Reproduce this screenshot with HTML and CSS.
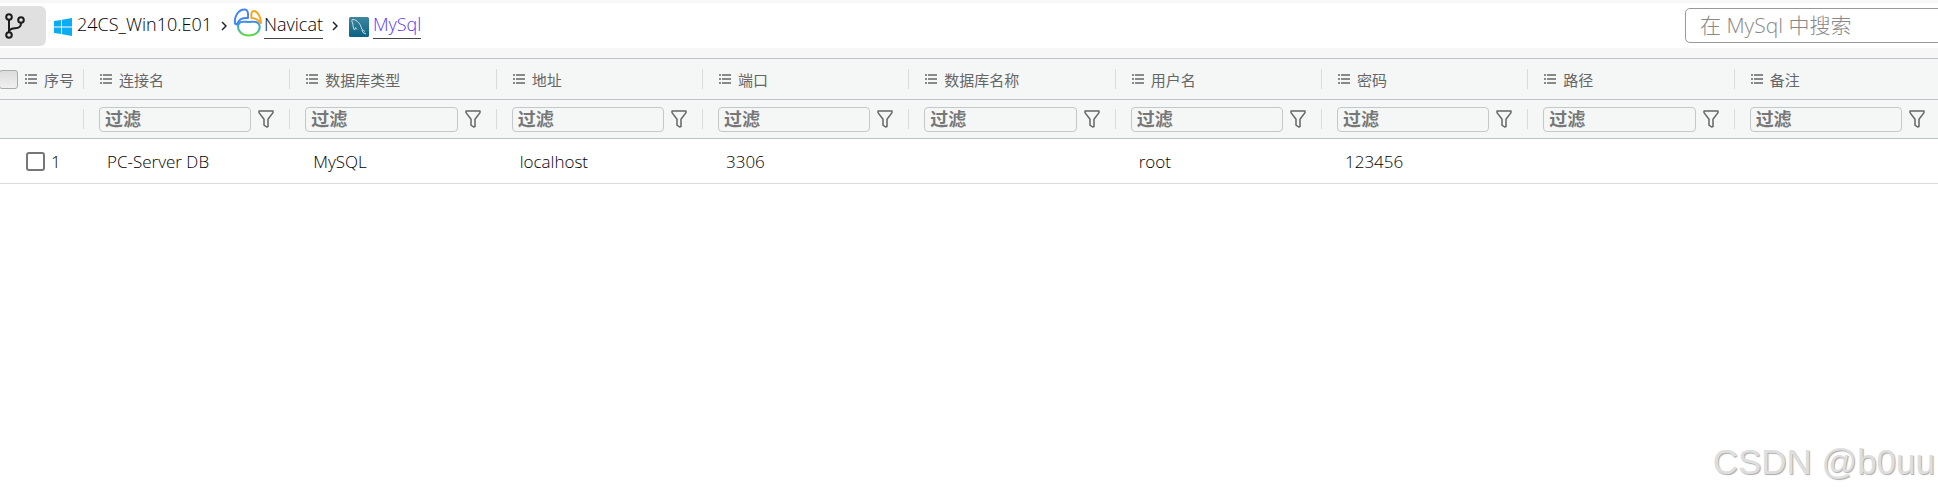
FILE: index.html
```
<!DOCTYPE html>
<html lang="zh-CN">
<head>
<meta charset="UTF-8">
<meta name="viewport" content="width=device-width, initial-scale=1">
<title>MySql</title>
<link rel="stylesheet" href="styles.css">
</head>
<body>

<!-- icons shared by all columns -->
<svg class="sprite" aria-hidden="true">
    <symbol id="menu" viewBox="0 0 12 10">
        <path d="M0 1h2M3 1h9M0 5h2M3 5h9M0 9h2M3 9h9" stroke="currentColor" stroke-width="1.3"/>
    </symbol>
    <symbol id="funnel" viewBox="0 0 16 18">
        <path d="M1 1h14v1.6L10 9.2v7.3L8.6 17 6 15.2v-6L1 2.6z" fill="none" stroke="currentColor" stroke-width="1.5" stroke-linejoin="round"/>
    </symbol>
</svg>

<header class="topbar">
    <button class="tree-button" type="button" aria-label="目录树">
        <svg width="20" height="26" viewBox="0 0 20 26" fill="none" stroke="#1c1c1c" stroke-width="2">
            <circle cx="4" cy="4" r="2.8"/>
            <circle cx="16" cy="7" r="2.8"/>
            <circle cx="4" cy="22" r="2.8"/>
            <path d="M4 7v12M16 10c0 4-2 5-6 5.300-3 .2-5 .7-6 3"/>
        </svg>
    </button>
    <nav class="breadcrumb">
        <svg class="win-icon" width="18" height="18" viewBox="0 0 18 18" fill="#0cacf5">
            <path d="M0 3l7-1v6.500H0zM8 1.800L18 0v8.500H8zM0 9.500h7V16l-7-1zM8 9.500h10V18L8 16.300z"/>
        </svg>
        <a class="crumb" href="#">24CS_Win10.E01</a>
        <svg class="arrow" width="6" height="10" viewBox="0 0 6 10"><path d="M1 1l4 4-4 4" fill="none" stroke="#222" stroke-width="1.500"/></svg>
        <svg class="navicat-icon" width="30" height="30" viewBox="0 0 30 30" fill="none" stroke-width="2" stroke-linecap="round" stroke-linejoin="round">
            <defs>
                <linearGradient id="ring" x1="0" y1="0" x2="0" y2="1">
                    <stop offset="0" stop-color="#3f8cf0"/>
                    <stop offset=".5" stop-color="#35b9a8"/>
                    <stop offset="1" stop-color="#5fd93c"/>
                </linearGradient>
            </defs>
            <path d="M6 15.500C3 21 8 27.500 16 27.500S29 21 25.500 15.500C23 12.500 20 14 16 14S8 12.500 6 15.500z" stroke="url(#ring)"/>
            <path d="M2 15.500C1 8 6 1 12 1.500c3 .3 3.500 3 3 8.500-4.500-.5-8 1-9.500 3.500L4 16.500z" stroke="#4087f2"/>
            <path d="M18.500 10c-.5-3.500 0-7 2-7 4 0 7.500 6 7.500 12-2.500-3-5-5-9.500-5z" stroke="#f8a51b"/>
        </svg>
        <a class="crumb link" href="#">Navicat</a>
        <svg class="arrow" width="6" height="10" viewBox="0 0 6 10"><path d="M1 1l4 4-4 4" fill="none" stroke="#222" stroke-width="1.500"/></svg>
        <svg class="mysql-icon" width="20" height="20" viewBox="0 0 20 20">
            <defs>
                <linearGradient id="sea" x1="0" y1="0" x2="0" y2="1">
                    <stop offset="0" stop-color="#3d879f"/>
                    <stop offset="1" stop-color="#0a6285"/>
                </linearGradient>
            </defs>
            <rect width="20" height="20" rx="1.500" fill="url(#sea)"/>
            <path d="M5.500 13C3.500 11 4.500 8 3.500 6 3 4 2 2.500 4 2.500c2 0 4 1.500 5.500 3C11.500 7.500 12 10 13 12.500c1 .8 2 1 3 2M5.500 13l1-2.500 1.500 2M13 13l1 2.500 3 1.500" fill="none" stroke="#c7dfe6" stroke-width="1"/>
        </svg>
        <a class="crumb link current" href="#">MySql</a>
    </nav>
    <input class="search" type="search" placeholder="在 MySql 中搜索" aria-label="在 MySql 中搜索">
</header>

<main class="grid">
    <table>
        <colgroup>
            <col class="col-index">
            <col span="9">
        </colgroup>
        <thead>
            <tr class="titles">
                <th><div class="title index"><input class="check-all" type="checkbox" aria-label="全选"><svg class="menu"><use href="#menu"/></svg>序号</div></th>
                <th><div class="title"><svg class="menu"><use href="#menu"/></svg>连接名</div></th>
                <th><div class="title"><svg class="menu"><use href="#menu"/></svg>数据库类型</div></th>
                <th><div class="title"><svg class="menu"><use href="#menu"/></svg>地址</div></th>
                <th><div class="title"><svg class="menu"><use href="#menu"/></svg>端口</div></th>
                <th><div class="title"><svg class="menu"><use href="#menu"/></svg>数据库名称</div></th>
                <th><div class="title"><svg class="menu"><use href="#menu"/></svg>用户名</div></th>
                <th><div class="title"><svg class="menu"><use href="#menu"/></svg>密码</div></th>
                <th><div class="title"><svg class="menu"><use href="#menu"/></svg>路径</div></th>
                <th><div class="title"><svg class="menu"><use href="#menu"/></svg>备注</div></th>
            </tr>
            <tr class="filters">
                <td><div class="filter"></div></td>
                <td><div class="filter"><input type="text" placeholder="过滤" aria-label="过滤连接名"><button type="button" aria-label="筛选"><svg><use href="#funnel"/></svg></button></div></td>
                <td><div class="filter"><input type="text" placeholder="过滤" aria-label="过滤数据库类型"><button type="button" aria-label="筛选"><svg><use href="#funnel"/></svg></button></div></td>
                <td><div class="filter"><input type="text" placeholder="过滤" aria-label="过滤地址"><button type="button" aria-label="筛选"><svg><use href="#funnel"/></svg></button></div></td>
                <td><div class="filter"><input type="text" placeholder="过滤" aria-label="过滤端口"><button type="button" aria-label="筛选"><svg><use href="#funnel"/></svg></button></div></td>
                <td><div class="filter"><input type="text" placeholder="过滤" aria-label="过滤数据库名称"><button type="button" aria-label="筛选"><svg><use href="#funnel"/></svg></button></div></td>
                <td><div class="filter"><input type="text" placeholder="过滤" aria-label="过滤用户名"><button type="button" aria-label="筛选"><svg><use href="#funnel"/></svg></button></div></td>
                <td><div class="filter"><input type="text" placeholder="过滤" aria-label="过滤密码"><button type="button" aria-label="筛选"><svg><use href="#funnel"/></svg></button></div></td>
                <td><div class="filter"><input type="text" placeholder="过滤" aria-label="过滤路径"><button type="button" aria-label="筛选"><svg><use href="#funnel"/></svg></button></div></td>
                <td><div class="filter"><input type="text" placeholder="过滤" aria-label="过滤备注"><button type="button" aria-label="筛选"><svg><use href="#funnel"/></svg></button></div></td>
            </tr>
        </thead>
        <tbody>
            <tr>
                <td><label class="row-index"><input type="checkbox">1</label></td>
                <td>PC-Server DB</td>
                <td>MySQL</td>
                <td>localhost</td>
                <td>3306</td>
                <td></td>
                <td>root</td>
                <td>123456</td>
                <td></td>
                <td></td>
            </tr>
        </tbody>
    </table>
</main>

<div class="watermark">CSDN @b0uu</div>

</body>
</html>
```
FILE: styles.css
```
* {
    box-sizing: border-box;
}

body {
    margin: 0;
    min-height: 100vh;
    position: relative;
    background: #fff;
    color: #000;
    font-family: "Open Sans", "Noto Sans CJK SC", sans-serif;
    font-size: 17px;
    font-weight: 300;
    overflow-x: hidden;
}

.sprite {
    display: none;
}

.topbar {
    display: flex;
    align-items: center;
    height: 58px;
    border-top: 3px solid #f7f7f7;
    border-bottom: 10px solid #f7f7f7;
    overflow: hidden;
}

.tree-button {
    display: flex;
    align-items: center;
    width: 46px;
    height: 40px;
    padding: 0 0 0 5px;
    border: none;
    border-radius: 0 6px 6px 0;
    background: #e0e0e0;
    cursor: pointer;
}

.breadcrumb {
    display: flex;
    align-items: center;
    flex: 1;
    margin-left: 8px;
    font-size: 18px;
}

.crumb {
    padding-bottom: 2px;
    color: #000;
    line-height: 24px;
    border-bottom: 1px solid transparent;
    text-decoration: none;
}

.link {
    border-color: #444;
}

.current {
    color: #5a38f0;
}

.win-icon {
    margin: 2px 5px 0 0;
}

.arrow {
    margin: 0 6px 0 9px;
}

.navicat-icon {
    margin: 0 1px 6px 0;
}

.mysql-icon {
    margin: 2px 4px 0 5px;
}

.search {
    width: 260px;
    height: 35px;
    margin-right: -7px;
    padding: 0 14px 2px;
    border: 1px solid #999;
    border-radius: 5px;
    background: #fff;
    font: inherit;
    font-size: 21px;
}

.search::placeholder {
    color: #888;
    opacity: 1;
}

.grid {
    overflow: hidden;
    border-top: 1px solid #bdc3c7;
}

/* the last column runs a little past the right edge */
table {
    width: calc(100% + 3px);
    table-layout: fixed;
    border-collapse: separate;
    border-spacing: 0;
}

.col-index {
    width: 84px;
}

th, td {
    padding: 0;
    text-align: left;
    font-weight: inherit;
}

thead {
    background: #f5f7f7;
    color: #666;
}

thead th, thead td {
    border-bottom: 1px solid #bdc3c7;
}

.title, .filter {
    display: flex;
    align-items: center;
    border-right: 1px solid #d9dcde;
    height: 20px;
}

.titles th {
    height: 41px;
    font-size: 15px;
    font-weight: 400;
}

.title {
    padding-left: 16px;
}

.index {
    padding-left: 0;
}

.menu {
    width: 12px;
    height: 10px;
    margin-right: 7px;
}

.check-all {
    appearance: none;
    flex: none;
    width: 19px;
    height: 19px;
    margin: 0 7px 0 -1px;
    border: 1px solid #aaa;
    border-radius: 3px;
    background: linear-gradient(#dcdcdc, #f0f0f0);
}

.filters td {
    height: 39px;
}

.filter {
    padding-left: 15px;
}

.filter input {
    flex: 1;
    min-width: 0;
    height: 25px;
    padding: 0 5px;
    border: 1px solid #c4c8c9;
    border-radius: 4px;
    background: transparent;
    font: inherit;
    font-size: 18px;
    font-weight: 700;
}

.filter input::placeholder {
    color: #777;
    opacity: 1;
}

.filter button {
    display: flex;
    margin: 0 15px 0 7px;
    padding: 0;
    border: none;
    background: none;
    color: #666;
    cursor: pointer;
}

.filter svg {
    width: 16px;
    height: 18px;
}

tbody td {
    height: 45px;
    padding-left: 23px;
    border-bottom: 1px solid #d9dcde;
}

tbody td:first-child {
    padding-left: 26px;
}

.row-index {
    display: flex;
    align-items: center;
    gap: 6px;
}

.row-index input {
    appearance: none;
    width: 19px;
    height: 19px;
    margin: 0;
    border: 2px solid #777;
    border-radius: 3px;
}

.watermark {
    position: absolute;
    right: 3px;
    bottom: 13px;
    color: #dedede;
    font-family: "Liberation Sans", Arial, sans-serif;
    font-size: 35px;
    font-weight: 400;
    line-height: 40px;
    text-shadow: 1px 1px 1px #aaa;
    pointer-events: none;
}
```
